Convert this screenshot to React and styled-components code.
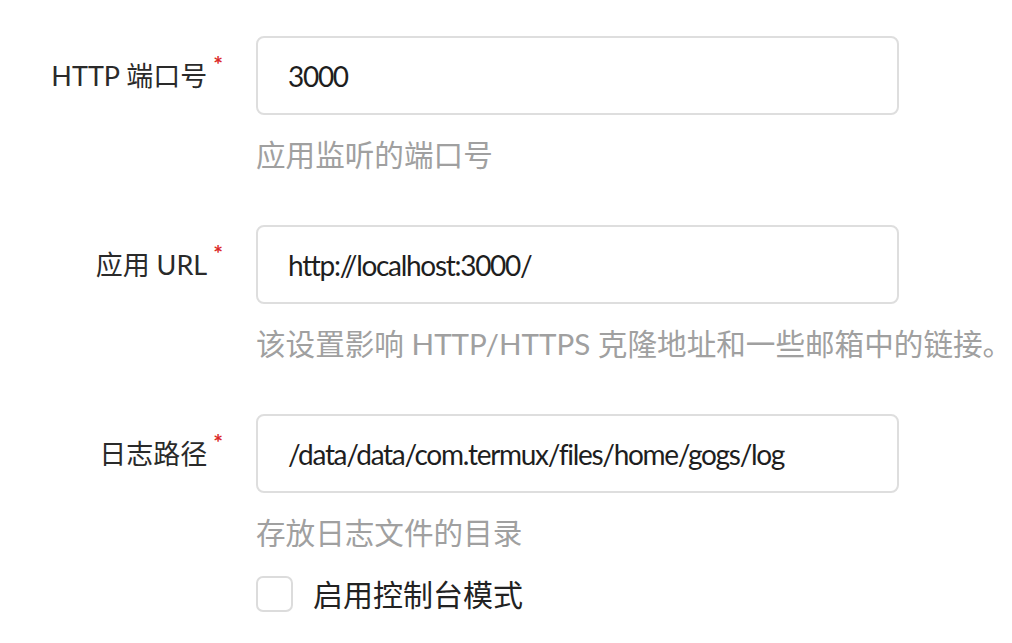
import React from "react";
import styled, { createGlobalStyle } from "styled-components";

const Global = createGlobalStyle`
  html, body { margin: 0; padding: 0; background: #fff; }
  body {
    font-family: Lato, "Noto Sans CJK SC", sans-serif;
    color: #222;
  }
`;

const Form = styled.form`
  display: flex;
  flex-direction: column;
  padding-top: 36px;
`;

const Field = styled.div`
  display: grid;
  grid-template-columns: 223px 1fr;
  column-gap: 33px;
  align-items: center;
  margin-bottom: ${(p) => p.$gap || 0}px;
`;

const Label = styled.label`
  display: flex;
  justify-content: flex-end;
  align-items: flex-start;
  font-size: 27px;
  line-height: 36px;
  color: #2a2a2a;
  white-space: nowrap;
`;

const Star = styled.span`
  color: #db2828;
  font-size: 23px;
  font-weight: 700;
  line-height: 20px;
  margin-left: 6px;
  margin-top: -4px;
`;

const Input = styled.input`
  box-sizing: border-box;
  width: 643px;
  height: 79px;
  border: 2px solid #dedede;
  border-radius: 8px;
  padding: 0 30px;
  font-family: Lato, "Noto Sans CJK SC", sans-serif;
  font-size: 28px;
  letter-spacing: -1.3px;
  color: #1e1e1e;
  background: #fff;
  outline: none;
`;

const Help = styled.div`
  grid-column: 2;
  margin-top: 20px;
  font-size: 29.6px;
  line-height: 40px;
  color: #a0a0a0;
  white-space: nowrap;
`;

const CheckRow = styled.label`
  grid-column: 2;
  display: flex;
  align-items: center;
  gap: 20px;
  margin-top: 21px;
  font-size: 30px;
  line-height: 40px;
  color: #222;
`;

const Box = styled.span`
  box-sizing: border-box;
  width: 37px;
  height: 36px;
  border: 2px solid #dcdcdc;
  border-radius: 7px;
  background: #fff;
`;

function Row({ label, value, help, gap, children }) {
  return (
    <Field $gap={gap}>
      <Label>
        {label}
        <Star>*</Star>
      </Label>
      <Input defaultValue={value} readOnly />
      <Help>{help}</Help>
      {children}
    </Field>
  );
}

export default function App() {
  return (
    <>
      <Global />
      <Form>
        <Row label="HTTP 端口号" value="3000" help="应用监听的端口号" gap={50} />
        <Row
          label="应用 URL"
          value="http://localhost:3000/"
          help="该设置影响 HTTP/HTTPS 克隆地址和一些邮箱中的链接。"
          gap={50}
        />
        <Row
          label="日志路径"
          value="/data/data/com.termux/files/home/gogs/log"
          help="存放日志文件的目录"
        >
          <CheckRow>
            <Box />
            启用控制台模式
          </CheckRow>
        </Row>
      </Form>
    </>
  );
}
